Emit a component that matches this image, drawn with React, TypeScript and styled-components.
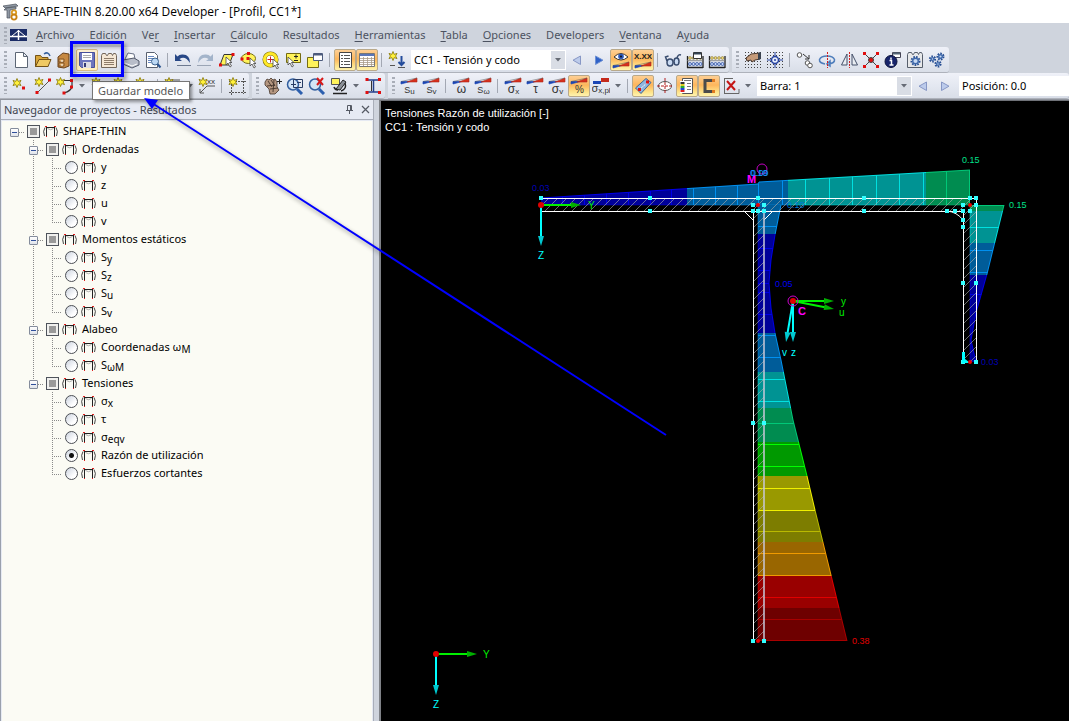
import React from "react";
import styled, { createGlobalStyle, css } from "styled-components";

const UI_FONT = '"Noto Sans", "Open Sans", sans-serif';

const GlobalStyle = createGlobalStyle`
  *, *::before, *::after { box-sizing: border-box; }
  body { margin: 0; background: #cfd4dd; font-family: ${UI_FONT}; font-size: 11px; color: #000; }
  button, input, select { font: inherit; color: inherit; margin: 0; padding: 0; }
`;

/* ---------- window frame ---------- */

const AppWindow = styled.div`
  position: relative;
  display: flex;
  flex-direction: column;
  min-height: 100vh;
  overflow: hidden;
`;

const TitleBar = styled.header`
  display: flex;
  align-items: center;
  gap: 4px;
  height: 23px;
  padding-left: 2px;
  background: #fff;
  font-family: "Open Sans", sans-serif;
  font-size: 12px;
  white-space: nowrap;
`;

const MenuBar = styled.nav`
  display: flex;
  align-items: center;
  height: 24px;
  background: #cfd4dd;
`;

const MenuLogo = styled.span`
  display: flex;
  width: 17px;
  margin-right: 9px;
`;

const MenuButton = styled.button`
  border: 0;
  background: none;
  color: #4c5260;
  line-height: 16px;
  margin-right: 15px;
  white-space: nowrap;
  u { text-underline-offset: 2px; }
`;

/* ---------- toolbars ---------- */

const ToolbarRow = styled.div`
  display: flex;
  gap: 3px;
  height: 26px;
  background: #cfd4dd;
`;

const Toolbar = styled.div<{ $grow?: boolean }>`
  display: flex;
  align-items: center;
  flex: ${(p) => (p.$grow ? "1 1 0" : "0 0 auto")};
  min-width: 0;
  padding-right: ${(p) => (p.$grow ? 0 : 1)}px;
  background: linear-gradient(#eff1f8, #e4e8f1 50%, #d9dee8);
  border-bottom: 1px solid #aeb2bb;
  border-radius: 0 3px 3px 0;
`;

const Grip = styled.span`
  flex: none;
  width: 3px;
  height: 17px;
  margin: 0 3px 0 4px;
  background: repeating-linear-gradient(#a9aeb8 0 2px, transparent 2px 4px);
`;

const hotStyle = {
  on: css`
    border-color: #b9a98a;
    background: linear-gradient(#fdcf95, #fdb65c 45%, #fee38a 80%, #fff3b0);
  `,
  hover: css`
    border-color: #d9bd84;
    background: linear-gradient(#fff3d8, #fbe0ac 50%, #fff0c0);
  `,
};

const ToolButton = styled.button<{ $state?: "on" | "hover" }>`
  display: flex;
  align-items: center;
  justify-content: center;
  flex: none;
  width: 22px;
  height: 22px;
  border: 1px solid transparent;
  border-radius: 2px;
  background: none;
  ${(p) => p.$state && hotStyle[p.$state]}
`;

const Separator = styled.span`
  flex: none;
  width: 1px;
  height: 14px;
  margin: 0 4px 0 3px;
  background: #a3a8b3;
`;

const DropButton = styled.button`
  display: flex;
  align-items: center;
  justify-content: center;
  flex: none;
  width: 12px;
  height: 22px;
  border: 0;
  background: none;
`;

const ComboFrame = styled.label<{ $width: number }>`
  display: flex;
  align-items: stretch;
  flex: none;
  width: ${(p) => p.$width}px;
  height: 20px;
  margin-left: 3px;
  background: #fff;
  border: 1px solid #fff;
`;

const ComboSelect = styled.select`
  appearance: none;
  flex: 1;
  min-width: 0;
  border: 0;
  background: none;
  padding-left: 2px;
`;

const ComboArrow = styled.span`
  display: flex;
  align-items: center;
  justify-content: center;
  width: 14px;
  background: #d9dde5;
`;

const PositionInput = styled.input`
  flex: 1 1 0;
  min-width: 0;
  height: 20px;
  margin-left: 3px;
  padding-left: 3px;
  border: 0;
  border-radius: 0;
  background: #fff;
`;

/* ---------- workspace ---------- */

const Workspace = styled.main`
  display: flex;
  flex: 1;
  gap: 5px;
  border-top: 1px solid #8f939c;
`;

const Navigator = styled.section`
  display: flex;
  flex-direction: column;
  flex: none;
  width: 374px;
  border-left: 1px solid #9aa0ac;
  border-right: 1px solid #a9aeb9;
  background: #e6eaf3;
`;

const NavigatorHeader = styled.div`
  display: flex;
  align-items: center;
  gap: 4px;
  height: 20px;
  padding: 0 2px 0 3px;
  border-bottom: 1px solid #a9aeb9;
  color: #3f4550;
`;

const NavigatorTitle = styled.h2`
  flex: 1;
  margin: 0;
  font: inherit;
  white-space: nowrap;
`;

const PanelButton = styled.button`
  display: flex;
  align-items: center;
  justify-content: center;
  width: 12px;
  height: 14px;
  border: 0;
  background: none;
`;

const Tree = styled.ul`
  flex: 1;
  margin: 1px 1px 0;
  padding: 1px 0 0 3px;
  list-style: none;
  background: #fbfbf4;
`;

const Branch = styled.ul`
  margin: 0;
  padding: 0;
  list-style: none;
`;

const TreeRow = styled.div`
  display: flex;
  align-items: center;
  height: 18px;
`;

type GuideKind = "blank" | "pipe" | "tee" | "elbow" | "node" | "nodeTee" | "nodeElbow";

const dotsDown = "repeating-linear-gradient(#8a8a8a 0 1px, transparent 1px 2px)";
const dotsAcross = "repeating-linear-gradient(90deg, #8a8a8a 0 1px, transparent 1px 2px)";

const guides: Record<GuideKind, string> = {
  blank: "none",
  pipe: `${dotsDown} 9px 0 / 1px 18px no-repeat`,
  tee: `${dotsDown} 9px 0 / 1px 18px no-repeat, ${dotsAcross} 9px 10px / 12px 1px no-repeat`,
  elbow: `${dotsDown} 9px 0 / 1px 10px no-repeat, ${dotsAcross} 9px 10px / 12px 1px no-repeat`,
  node: `${dotsAcross} 14px 10px / 6px 1px no-repeat`,
  nodeTee: `${dotsDown} 9px 0 / 1px 18px no-repeat, ${dotsAcross} 14px 10px / 6px 1px no-repeat`,
  nodeElbow: `${dotsDown} 9px 0 / 1px 10px no-repeat, ${dotsAcross} 14px 10px / 6px 1px no-repeat`,
};

const Guide = styled.span<{ $kind: GuideKind }>`
  display: flex;
  align-items: flex-end;
  justify-content: center;
  flex: none;
  width: 19px;
  height: 18px;
  background: ${(p) => guides[p.$kind]};
`;

const Expander = styled.button`
  width: 9px;
  height: 9px;
  margin-bottom: 3px;
  border: 1px solid #848c9c;
  border-radius: 1px;
  background: linear-gradient(#2f4f9a, #2f4f9a) center / 5px 1px no-repeat, linear-gradient(#fff, #dfe3ea);
`;

const NodeLabel = styled.label`
  display: flex;
  align-items: center;
  margin-left: 3px;
  white-space: nowrap;
`;

const NodeCheck = styled.input`
  appearance: none;
  width: 13px;
  height: 13px;
  margin-right: 3px;
  border: 1px solid #4e535b;
  background: linear-gradient(#999, #999) center / 7px 7px no-repeat, #f0f0ee;
`;

const NodeRadio = styled.input`
  appearance: none;
  width: 13px;
  height: 13px;
  margin-right: 3px;
  border: 1px solid #4c4f55;
  border-radius: 50%;
  background: linear-gradient(135deg, #ccd3df, #fff 70%);
  &:checked {
    background: radial-gradient(circle, #111 0 2px, transparent 3px), linear-gradient(135deg, #ccd3df, #fff 70%);
  }
`;

const NodeText = styled.span`
  margin-left: 5px;
  line-height: 18px;
`;

const Lowered = styled.span`
  position: relative;
  top: 2px;
  font-size: 10px;
`;

const Canvas = styled.section`
  flex: 1;
  min-width: 0;
  overflow: hidden;
  border-left: 2px solid #7f8287;
  border-top: 1px solid #6f7278;
  background: #000;
`;

const Scene = styled.svg`
  display: block;
  font-family: "Liberation Sans", Arial, sans-serif;
  font-size: 10px;
`;

const SceneTitle = styled.text`
  font-size: 11px;
  fill: #fff;
`;

/* ---------- annotations over the window ---------- */

const Tooltip = styled.div`
  position: absolute;
  left: 92px;
  top: 81px;
  padding: 0 6px 0 5px;
  border: 1px solid #767676;
  background: #fff;
  color: #575757;
  line-height: 17px;
  box-shadow: 2px 2px 3px rgba(0, 0, 0, 0.4);
  white-space: nowrap;
`;

const Annotation = styled.svg`
  position: absolute;
  left: 0;
  top: 0;
  pointer-events: none;
  filter: drop-shadow(2px 3px 2px rgba(0, 0, 0, 0.4));
`;

/* ---------- icons (18 x 18) ---------- */

const Star = ({ x = 5, y = 5 }: { x?: number; y?: number }) => (
  <path
    transform={`translate(${x} ${y})`}
    d="M0-4.5 1.2-1.6 4-2.6 2.6 0 4 2.6 1.2 1.6 0 4.5-1.2 1.6-4 2.6-2.6 0-4-2.6-1.2-1.6z"
    fill="#fff13a"
    stroke="#857400"
    strokeWidth=".8"
  />
);

const Red = ({ x, y }: { x: number; y: number }) => <rect x={x - 1.5} y={y - 1.5} width="3" height="3" fill="#e01010" />;

const Wedge = ({ y = 1 }: { y?: number }) => (
  <g transform={`translate(1 ${y})`}>
    <path d="M0 3.500H9L0 6z" fill="#1b46b5" stroke="#1b46b5" strokeWidth=".7" />
    <path d="M6 4 16 0V4z" fill="#d8301c" stroke="#b02a1c" strokeWidth=".6" />
    <path d="M0 3.500 16 0" stroke="#555" strokeWidth=".5" />
  </g>
);

const Result = ({ main, sub = "", size = 12 }: { main: string; sub?: string; size?: number }) => (
  <>
    <Wedge />
    <text x="9.5" y="16" textAnchor="middle" fontSize={size} fontFamily="Liberation Sans" fill="#333">
      {main}
      <tspan fontSize="8" dy="1">{sub}</tspan>
    </text>
  </>
);

const Pointer = ({ x, y }: { x: number; y: number }) => (
  <path transform={`translate(${x} ${y})`} d="M0 0v8l2-2 2 4 1.5-1-2-3.500H6z" fill="#fff" stroke="#444" strokeWidth=".8" />
);

const Lens = () => (
  <>
    <path d="m11 12 5 5" stroke="#2c5fae" strokeWidth="3" />
    <circle cx="7" cy="7.500" r="5.500" fill="#cfe3f8" fillOpacity=".8" stroke="#335f9f" strokeWidth="1.500" />
  </>
);

const Abacus = () => (
  <>
    <path d="M1.500 5v12M17 5v12M1 16.500h16" stroke="#222" strokeWidth="1.300" />
    <path d="M1 9.700h16" stroke="#777" strokeWidth=".8" />
    {[4, 7.5, 11, 14.5].map((x) => (
      <g key={x}>
        <circle cx={x} cy="7" r="1.400" fill="#f2dc78" stroke="#6b5a1c" strokeWidth=".5" />
        <circle cx={x} cy="13" r="1.500" fill="#c3d6fb" stroke="#1d3f96" strokeWidth=".7" />
      </g>
    ))}
  </>
);

const Gear = ({ x, y, r }: { x: number; y: number; r: number }) => (
  <>
    <circle cx={x} cy={y} r={r} fill="none" stroke="#284f93" strokeWidth="2" strokeDasharray="1.600 1.100" />
    <circle cx={x} cy={y} r={r - 1.2} fill="#c9dbf4" stroke="#3f69ac" strokeWidth="1.400" />
  </>
);

const DotGrid = () => (
  <>
    {[1, 4, 7, 10, 13, 16].map((y) => (
      <path key={y} d={`M1 ${y}.5H18`} stroke="#444" strokeDasharray="1 2" />
    ))}
  </>
);

const icons: Record<string, React.ReactNode> = {
  new: <path d="M3.500 1.500h8l4 4v11h-12zM11.500 1.500v4h4" fill="#fff" stroke="#5c6675" />,
  open: (
    <>
      <path d="M1.500 15.500v-11h5l1.500 2h6v9z" fill="#d7a53a" stroke="#735217" />
      <path d="m1.500 15.500 3.500-7h12l-3 7z" fill="#efc963" stroke="#735217" />
      <path d="M10 3q4-3 6 2" fill="none" stroke="#36609d" strokeWidth="1.500" />
    </>
  ),
  cabinet: (
    <>
      <path d="m2 6 5-4 6 1v12l-5 2-6-1z" fill="#c68942" stroke="#68401a" />
      <path d="M3 8h5v3H3zM3 12h5v3H3z" fill="#e4af67" stroke="#68401a" strokeWidth=".7" />
      <path d="M5 10h2M5 14h2" stroke="#fff" />
    </>
  ),
  save: (
    <>
      <path d="M1.500 1.500h15v15h-13l-2-2z" fill="#6b74bd" stroke="#47509a" />
      <path d="M4 2h10v7H4z" fill="#fff" />
      <path d="M5 4.500h8M5 6.500h8" stroke="#aaa" />
      <path d="M5 11h8v6H5z" fill="#dcdce4" />
      <path d="M6 12h2v4H6z" fill="#333a77" />
    </>
  ),
  props: (
    <>
      <path d="M1.500 16.500v-12l1-2h3l1 2h1l1-2h3l1 2 1-2h2l1 2v12z" fill="#f5e7d5" stroke="#73665a" />
      <path d="M4 7.500h10M4 9.500h10M4 11.500h10M4 13.500h10" stroke="#8d7b69" />
    </>
  ),
  print: (
    <>
      <path d="m3 8 3-6 6 1 1 5" fill="#fff" stroke="#697287" />
      <path d="m1 9 11-2 5 3v4l-7 3-9-4z" fill="#b8bdc9" stroke="#52596a" />
      <path d="m3 12 7 3 5-2" fill="none" stroke="#fff" />
    </>
  ),
  preview: (
    <>
      <path d="M2.500 1.500h8l3 3v12h-11z" fill="#fff" stroke="#596170" />
      <path d="M4 5.500h6M4 7.500h7M4 9.500h4M4 11.500h3" stroke="#6888c0" />
      <circle cx="11" cy="10.500" r="3.500" fill="#bcd8f4" stroke="#3e648f" />
      <path d="m13.500 13 3 3.500" stroke="#2e5790" strokeWidth="2" />
    </>
  ),
  undo: (
    <>
      <path d="M1 3v7h7L5.500 8Q11 4 16 12q0-9-8-8.500-3 0-4.500 2z" fill="#274786" />
      <path d="M3 14.500h14" stroke="#6d7990" />
    </>
  ),
  redo: (
    <>
      <path d="M17 3v7h-7l2.500-2Q7 4 2 12q0-9 8-8.500 3 0 4.500 2z" fill="#a3b4ca" />
      <path d="M1 14.500h14" stroke="#9ba5b5" />
    </>
  ),
  para: (
    <>
      <path d="M6 3.500h9L11 14H2z" fill="#fff35a" stroke="#333" />
      <Red x={15} y={3.5} /><Red x={2.5} y={14} />
      <Pointer x={8} y={6} />
    </>
  ),
  ellipse: (
    <>
      <ellipse cx="8.500" cy="7.500" rx="7" ry="5" fill="#fff35a" stroke="#756b12" />
      <Red x={8.500} y={2.500} /><Red x={2} y={8} /><Red x={8} y={7.500} />
      <Pointer x={10} y={7} />
    </>
  ),
  ring: (
    <>
      <circle cx="8.500" cy="8.500" r="6" fill="#fff" stroke="#7a6a00" strokeWidth="4" />
      <circle cx="8.500" cy="8.500" r="6" fill="none" stroke="#ffe928" strokeWidth="3" />
      <path d="M5.500 8.500h6M8.500 5.500v6" stroke="#d02020" />
      <Pointer x={11} y={8} />
    </>
  ),
  area: (
    <>
      <path d="M2.500 2.500h14v9h-14z" fill="#fff35a" stroke="#756b12" />
      <path d="M10 5.500h4M12 3.500v4M10 9.500h4" stroke="#222" />
      <Pointer x={4} y={6} />
    </>
  ),
  frames: (
    <>
      <path d="M1.500 6.500h11v10h-11z" fill="#fff35a" stroke="#756b12" />
      <path d="M7.500 2.500h9v7h-9z" fill="#fff" stroke="#4c5b7c" /><path d="M8 3.500h8" stroke="#4c5b7c" strokeWidth="2" />
    </>
  ),
  navigator: (
    <>
      <path d="M3.500 1.500h12v15h-12z" fill="#fff" stroke="#444" />
      <path d="M5 4.500h2M5 7.500h2M5 10.500h2M5 13.500h2M8 4.500h6M8 7.500h6M8 10.500h6M8 13.500h6" stroke="#555" />
    </>
  ),
  tables: (
    <>
      <path d="M1.500 2.500h15v13h-15z" fill="#fff" stroke="#777" />
      <path d="M2 4h14" stroke="#5a76b8" strokeWidth="2" />
      <path d="M2 7.500h14M2 9.500h14M2 11.500h14M2 13.500h14M5.500 6v9M9.500 6v9M13.500 6v9" stroke="#a89b88" strokeWidth=".8" />
    </>
  ),
  loadcase: (
    <>
      <Star x={5} y={5} />
      <path d="M2 14.500h5M10 16.500h7" stroke="#555" />
      <path d="M13.500 5v9m-3-3 3 3 3-3" stroke="#244c9c" strokeWidth="2" />
    </>
  ),
  prev: <path d="M12.500 5v8.500L5 9.200z" fill="#bccbeb" stroke="#8797c5" />,
  next: <path d="M5.500 5v8.500L13 9.200z" fill="#2f62c8" stroke="#6f91d4" />,
  nextSoft: <path d="M5.500 5v8.500L13 9.200z" fill="#bccbeb" stroke="#8797c5" />,
  eye: (
    <>
      <path d="M2 6q7-7 14 0-7 6-14 0z" fill="#fff" stroke="#333" />
      <circle cx="9" cy="5.500" r="2.800" fill="#2b56b8" /><circle cx="9" cy="5.500" r="1" fill="#111" />
      <Wedge y={11} />
    </>
  ),
  values: (
    <>
      <text x="9" y="8" textAnchor="middle" fontSize="8" fontWeight="bold" fontFamily="Liberation Sans" fill="#222">X.XX</text>
      <Wedge y={11} />
    </>
  ),
  glasses: (
    <>
      <ellipse cx="6" cy="11.500" rx="3" ry="3.500" fill="#c9daf2" stroke="#394c6e" strokeWidth="1.500" />
      <ellipse cx="12.500" cy="10.500" rx="2.500" ry="3.500" fill="#c9daf2" stroke="#394c6e" strokeWidth="1.500" />
      <path d="M3 10 1.500 6l3-1M13 7q1-4 4-3" fill="none" stroke="#394c6e" strokeWidth="1.500" />
    </>
  ),
  calcAll: (
    <>
      <Abacus />
      <path d="M7.500 1.500h8v6h-8z" fill="#fff" stroke="#333" /><path d="M8 2.500h7" stroke="#345" strokeWidth="2" />
    </>
  ),
  calc: <Abacus />,
  handGrid: (
    <>
      <DotGrid />
      <path d="m2 7 5-4 9-1v6l-5 1-3 2-1-2-4 1z" fill="#c49a79" stroke="#4a382e" />
      <path d="m14 2 3-1v7l-3 1z" fill="#39424f" />
    </>
  ),
  snapGrid: (
    <>
      <DotGrid />
      <path d="M9 1v16M1 9h16" stroke="#2542a0" />
      <circle cx="9" cy="9" r="3.500" fill="#e6ebfa" stroke="#2542a0" strokeWidth="1.500" />
      <circle cx="9" cy="9" r="1" fill="#2542a0" />
    </>
  ),
  copy: (
    <>
      <circle cx="3.500" cy="4" r="2.300" fill="#fff" stroke="#555" />
      <circle cx="11.500" cy="12" r="2.300" fill="#fff" stroke="#555" />
      <circle cx="14" cy="14.500" r="2.300" fill="#fff" stroke="#555" />
      <path d="m7 3 6 5m0-4v4H9" fill="none" stroke="#333" />
    </>
  ),
  rotate: (
    <>
      <path d="M7 13Q1 12 1.500 8.500 3 5 9 5t7.500 3.500Q17 12 11 13M12 10v5l-3-2z" fill="none" stroke="#4f7ebc" strokeWidth="1.500" />
      <path d="M9.500 1v16" stroke="#d02020" strokeDasharray="2 1" />
    </>
  ),
  mirror: (
    <>
      <path d="M7 3v11H1.500zM12 3v11h5.500z" fill="#e9edf2" stroke="#44506a" />
      <path d="M9.500 1v16" stroke="#d02020" strokeDasharray="2 1" />
    </>
  ),
  cross: (
    <>
      <path d="m2 2 14 14M16 2 2 16" stroke="#444" />
      <circle cx="9" cy="9" r="2.500" fill="#e01010" stroke="#444" />
      <Red x={2.500} y={2.500} /><Red x={15.500} y={2.500} /><Red x={2.500} y={15.500} /><Red x={15.500} y={15.500} />
    </>
  ),
  info: (
    <>
      <path d="M8.500 1.500h8v5h-8z" fill="#fff" stroke="#445" /><path d="M9 2.500h7" stroke="#567" strokeWidth="2" />
      <circle cx="7" cy="10.500" r="6" fill="#17246b" stroke="#0b123b" />
      <path d="M7 6.500v2M5.500 9.500h2v4M5.500 14h4" stroke="#fff" strokeWidth="1.500" fill="none" />
    </>
  ),
  modules: (
    <>
      <path d="M1.500 16.500v-13l1-2h3l1 2h1l1-2h3l1 2 1-2h2l1 2v13z" fill="#e7e8ea" stroke="#565e6b" />
      <Gear x={9.500} y={10} r={4} />
    </>
  ),
  gears: (
    <>
      <Gear x={4.500} y={8} r={2.600} /><Gear x={12.500} y={5.500} r={3} /><Gear x={10} y={13} r={2.600} />
    </>
  ),
  node: (<><Star x={5} y={6} /><Red x={11.500} y={11} /></>),
  line: (<><path d="M3 16 16 3" stroke="#555" /><Red x={3} y={15.500} /><Red x={15.500} y={3} /><Star x={5} y={5} /></>),
  poly: (
    <>
      <path d="M5 3.500h11v6Q15 14 8 16" fill="none" stroke="#333" strokeWidth="1.200" />
      <Red x={15.500} y={3.500} /><Red x={15.500} y={10} /><Red x={8} y={16} /><Star x={4.500} y={5} />
    </>
  ),
  element: (<><path d="M4 15h12V5" fill="none" stroke="#555" strokeWidth="2" /><Star x={6} y={5} /></>),
  dimension: (<><path d="M2 15 7 9M3 3h13M4 8h12M2 12v4h4" fill="none" stroke="#555" /><Star x={5} y={5} /></>),
  dimXX: (
    <>
      <path d="m2 16 7-7h8M2 12v4h4" fill="none" stroke="#555" />
      <Star x={5} y={5} />
      <text x="9" y="7" fontSize="8" fontFamily="Liberation Sans" fill="#333">xx</text>
    </>
  ),
  guides: (
    <>
      <path d="M3.500 4v14M15.500 1v16M1 4.500h17M1 15.500h17" stroke="#555" strokeDasharray="2 1" /><Star x={5} y={5} />
    </>
  ),
  hand: (
    <>
      <path d="m1 5 2-3 2 1 2-2 2 2 2-1 2 3v5l2 3-4 4H6l-1-5-4-4z" fill="#b59781" stroke="#44352b" strokeWidth=".8" />
      <path d="m4 4 4 6M7 3l4 6M3 9l8-1M6 12l8-1M10 3l-1 12" stroke="#44352b" strokeWidth=".9" />
      <path d="M13 4.500h5M15.500 2v5" stroke="#222" />
    </>
  ),
  zoomWindow: (<><Lens /><path d="M7.500 2.500h9v8h-9z" fill="none" stroke="#273b63" /><path d="M5 7.500h5M11 5.500h4" stroke="#273b63" /></>),
  zoomOff: (<><Lens /><path d="m9 1 6 7M15 1 9 8" stroke="#d71919" strokeWidth="2" /></>),
  view: (
    <>
      <path d="M1.500 1.500h8v6h-8z" fill="#fff35a" stroke="#555" />
      <path d="m6 12 7-9 3 2-6 8z" fill="#8a8f96" stroke="#222" />
      <path d="M4 10q1 3 4 3M3 16.500h14M15 6q2 6-4 8" stroke="#222" strokeWidth="1.500" />
    </>
  ),
  section: (
    <>
      <path d="M3 3h12M9.500 3v12M3 15h12" stroke="#24408c" strokeWidth="1.500" />
      <path d="M7.500 4v10" stroke="#333" />
      <Red x={3} y={2.500} /><Red x={15.500} y={2.500} /><Red x={3} y={15.500} /><Red x={15.500} y={15.500} />
    </>
  ),
  su: <Result main="S" sub="u" size={9} />,
  sv: <Result main="S" sub="v" size={9} />,
  omega: <Result main="ω" />,
  somega: <Result main="S" sub="ω" size={9} />,
  sigmax: <Result main="σ" sub="x" />,
  tau: <Result main="τ" />,
  sigmav: <Result main="σ" sub="v" />,
  ratio: <Result main="%" size={10} />,
  sigmapl: (
    <>
      <path d="M1 4h8v3H1z" fill="#1b46b5" /><path d="M9 1h8v4H9z" fill="#c52a1c" />
      <text x="9" y="15" textAnchor="middle" fontSize="11" fontFamily="Liberation Sans" fill="#333">
        σ<tspan fontSize="8" dy="1">x,pl</tspan>
      </text>
    </>
  ),
  solid: (
    <>
      <path d="M1.500 11 12 1.500l5 4L7 16.500z" fill="#8fb4df" stroke="#3f6694" />
      <path d="m5 13 9-8" stroke="#fff" strokeDasharray="2 1" /><Red x={13.500} y={5} /><Red x={5.500} y={12.500} />
    </>
  ),
  target: (
    <>
      <ellipse cx="9" cy="9" rx="6.500" ry="4.500" fill="#fff" stroke="#555" />
      <path d="M9 1v16M1 9h16" stroke="#b32020" strokeDasharray="3 1" />
    </>
  ),
  panel: (
    <>
      <path d="M4.500 1.500h10v15h-10z" fill="#fff" stroke="#555" />
      <path d="M2 4h6v12H2z" fill="#fff" />
      <path d="M2.500 6h4" stroke="#333" strokeWidth="2" /><path d="M2.500 8h4" stroke="#dc2" strokeWidth="2" />
      <path d="M2.500 10h4" stroke="#2a3" strokeWidth="2" /><path d="M2.500 12h4" stroke="#24c" strokeWidth="2" />
      <path d="M2.500 14h4" stroke="#d22" strokeWidth="2" />
      <path d="M6 3.500h7M9 6.500h4M9 9.500h4M9 12.500h4" stroke="#777" />
    </>
  ),
  profile: (<><path d="M12 3.500H5v11h7" fill="none" stroke="#4b4b4b" strokeWidth="3" /><path d="M12 3.500h3M12 14.500h3" stroke="#e07a20" strokeWidth="3" /></>),
  clear: (
    <>
      <path d="M2.500 17V1.500M2 16.500h15V12M2 1.500h9" fill="none" stroke="#666" />
      <path d="m5 4 8 9M13 4 5 13" stroke="#c51616" strokeWidth="2" />
    </>
  ),
};

const Icon = ({ name }: { name: string }) => (
  <svg width="18" height="18" viewBox="0 0 18 18" fill="none" aria-hidden="true">
    {icons[name]}
  </svg>
);

const CaretDown = () => (
  <svg width="6" height="4" viewBox="0 0 6 4" aria-hidden="true">
    <path d="M0 0h6L3 3.500z" fill="#666b75" />
  </svg>
);

const SectionGlyph = () => (
  <svg width="15" height="13" viewBox="0 0 15 13" fill="none" aria-hidden="true">
    <path d="M2 2.500Q-.5 6 1.500 11M13 2.500Q15.500 6 13.500 11" stroke="#333" strokeWidth=".9" />
    <path d="M3 2.500h9M3.500 3v8M11.500 3v8" stroke="#222" />
    <path d="M4.500 3.500q3 2.500 6 0" stroke="#999" strokeWidth=".8" />
    <path d="M2 1.500h2M11 1.500h2M3 11.500h1M11 11.500h1" stroke="#e02020" />
  </svg>
);

/* ---------- toolbar content ---------- */

type Tool = { icon: string; label: string; state?: "on" | "hover"; drop?: boolean };
const t = (icon: string, label: string, state?: "on" | "hover", drop?: boolean): Tool => ({ icon, label, state, drop });

const fileTools: Tool[][] = [
  [
    t("new", "Nuevo"), t("open", "Abrir"), t("cabinet", "Administrador de proyectos"), t("save", "Guardar modelo", "hover"),
    t("props", "Propiedades"), t("print", "Imprimir"), t("preview", "Informe"),
  ],
  [
    t("undo", "Deshacer"), t("redo", "Rehacer"), t("para", "Selección por paralelogramo"), t("ellipse", "Selección por elipse"),
    t("ring", "Selección por anillo"), t("area", "Selección por ventana"), t("frames", "Ventanas"),
  ],
  [t("navigator", "Navegador", "on"), t("tables", "Tablas", "on")],
  [t("loadcase", "Nuevo caso de carga")],
];
const caseTools: Tool[][] = [
  [t("prev", "Caso anterior"), t("next", "Caso siguiente"), t("eye", "Mostrar resultados", "on"), t("values", "Mostrar valores", "on")],
  [t("glasses", "Vista"), t("calcAll", "Calcular todo"), t("calc", "Calcular")],
];
const editTools: Tool[][] = [
  [t("handGrid", "Plano de trabajo"), t("snapGrid", "Rejilla")],
  [
    t("copy", "Mover o copiar"), t("rotate", "Girar"), t("mirror", "Simetría"), t("cross", "Intersección"),
    t("info", "Información"), t("modules", "Módulos"), t("gears", "Configuración"),
  ],
];
const insertTools: Tool[][] = [
  [
    t("node", "Nuevo nudo"), t("line", "Nueva línea"), t("poly", "Nuevo arco", undefined, true), t("element", "Nuevo elemento"),
    t("element", "Nueva sección"), t("element", "Nuevo punto"),
  ],
  [t("dimension", "Acotación", undefined, true), t("dimXX", "Comentario")],
  [t("guides", "Líneas auxiliares")],
];
const viewTools: Tool[][] = [
  [
    t("hand", "Mover vista"), t("zoomWindow", "Zoom ventana"), t("zoomOff", "Zoom anterior"),
    t("view", "Vista", undefined, true), t("section", "Sección"),
  ],
];
const resultTools: Tool[][] = [
  [t("su", "Su"), t("sv", "Sv")],
  [t("omega", "Omega"), t("somega", "S omega")],
  [
    t("sigmax", "Sigma x"), t("tau", "Tau"), t("sigmav", "Sigma v"), t("ratio", "Razón de utilización", "on"),
    t("sigmapl", "Sigma x,pl", undefined, true),
  ],
  [
    t("solid", "Relleno", "on"), t("target", "Centro"), t("panel", "Panel", "on"), t("profile", "Perfil", "on"),
    t("clear", "Borrar", undefined, true),
  ],
];
const stepTools: Tool[][] = [[t("prev", "Anterior"), t("nextSoft", "Siguiente")]];

const ToolGroups = ({ groups }: { groups: Tool[][] }) => (
  <>
    {groups.map((group, g) => (
      <React.Fragment key={g}>
        {g > 0 && <Separator />}
        {group.map((tool, i) => (
          <React.Fragment key={i}>
            <ToolButton type="button" aria-label={tool.label} $state={tool.state}>
              <Icon name={tool.icon} />
            </ToolButton>
            {tool.drop && (
              <DropButton type="button" aria-label={`${tool.label}: opciones`}>
                <CaretDown />
              </DropButton>
            )}
          </React.Fragment>
        ))}
      </React.Fragment>
    ))}
  </>
);

const Combo = ({ label, value, width }: { label: string; value: string; width: number }) => (
  <ComboFrame $width={width}>
    <ComboSelect aria-label={label} defaultValue={value}>
      <option>{value}</option>
    </ComboSelect>
    <ComboArrow>
      <CaretDown />
    </ComboArrow>
  </ComboFrame>
);

const menus: [string, string, string][] = [
  ["", "A", "rchivo"], ["", "E", "dición"], ["Ve", "r", ""], ["", "I", "nsertar"], ["", "C", "álculo"], ["Res", "u", "ltados"],
  ["", "H", "erramientas"], ["", "T", "abla"], ["", "O", "pciones"], ["Developers", "", ""], ["", "V", "entana"], ["A", "y", "uda"],
];

/* ---------- navigator tree ---------- */

type Leaf = { text: string; low?: string };
const branches: { text: string; leaves: Leaf[] }[] = [
  { text: "Ordenadas", leaves: [{ text: "y" }, { text: "z" }, { text: "u" }, { text: "v" }] },
  {
    text: "Momentos estáticos",
    leaves: [{ text: "S", low: "y" }, { text: "S", low: "z" }, { text: "S", low: "u" }, { text: "S", low: "v" }],
  },
  { text: "Alabeo", leaves: [{ text: "Coordenadas ω", low: "M" }, { text: "S", low: "ωM" }] },
  {
    text: "Tensiones",
    leaves: [
      { text: "σ", low: "x" }, { text: "τ" }, { text: "σ", low: "eqv" },
      { text: "Razón de utilización" }, { text: "Esfuerzos cortantes" },
    ],
  },
];

const GroupNode = ({ text, nested, guide }: { text: string; nested?: boolean; guide: GuideKind }) => (
  <TreeRow>
    {nested && <Guide $kind="blank" />}
    <Guide $kind={guide}>
      <Expander type="button" aria-label={`Contraer ${text}`} />
    </Guide>
    <NodeLabel>
      <NodeCheck type="checkbox" />
      <SectionGlyph />
      <NodeText>{text}</NodeText>
    </NodeLabel>
  </TreeRow>
);

const NavigatorTree = () => (
  <Tree>
    <li>
      <GroupNode text="SHAPE-THIN" guide="node" />
      <Branch>
        {branches.map((branch, b) => (
          <li key={branch.text}>
            <GroupNode text={branch.text} nested guide={b < branches.length - 1 ? "nodeTee" : "nodeElbow"} />
            <Branch>
              {branch.leaves.map((leaf, i) => (
                <li key={i}>
                  <TreeRow>
                    <Guide $kind="blank" />
                    <Guide $kind={b < branches.length - 1 ? "pipe" : "blank"} />
                    <Guide $kind={i < branch.leaves.length - 1 ? "tee" : "elbow"} />
                    <NodeLabel>
                      <NodeRadio type="radio" name="result" defaultChecked={leaf.text === "Razón de utilización"} />
                      <SectionGlyph />
                      <NodeText>
                        {leaf.text}
                        {leaf.low && <Lowered>{leaf.low}</Lowered>}
                      </NodeText>
                    </NodeLabel>
                  </TreeRow>
                </li>
              ))}
            </Branch>
          </li>
        ))}
      </Branch>
    </li>
  </Tree>
);

/* ---------- cross-section scene ---------- */

const hues = {
  navy: ["#000099", "#0000e6"],
  blue: ["#005c99", "#0090f0"],
  teal: ["#009393", "#00e0e0"],
  sea: ["#008c50", "#00c878"],
  green: ["#009900", "#00ff00"],
  yellow: ["#999900", "#f0f000"],
  olive: ["#7d7d00", "#b9b900"],
  orange: ["#996600", "#f09a00"],
  red: ["#990000", "#e00000"],
  maroon: ["#6e0000", "#a80000"],
} as const;
type Hue = keyof typeof hues;
type Band = [Hue, number, number];

const flangeBands: Band[] = [["navy", 541, 687], ["blue", 687, 788], ["teal", 788, 926], ["sea", 926, 970]];
const webBands: Band[] = [
  ["blue", 205, 234], ["navy", 234, 333], ["blue", 333, 372], ["teal", 372, 408], ["sea", 408, 442], ["green", 442, 476],
  ["yellow", 476, 510], ["olive", 510, 542], ["orange", 542, 576], ["red", 576, 608], ["maroon", 608, 641],
];
const sideBands: Band[] = [["sea", 205, 211], ["teal", 211, 243], ["blue", 243, 275], ["navy", 275, 362]];

const flangeProfile: [number, number][] = [[541, 198], [758, 184], [759, 182], [970, 170]];
const webProfile: [number, number][] = [
  [205, 781], [235, 775], [260, 771], [283, 769], [308, 771], [333, 775], [360, 781], [420, 793], [476, 807], [510, 815], [575, 831], [641, 847],
];
const sideProfile: [number, number][] = [[205, 1004], [274, 987], [313, 976], [340, 971], [362, 976]];

const valueAt = (profile: [number, number][], at: number) => {
  for (let i = 1; i < profile.length; i++) {
    const [a, va] = profile[i - 1];
    const [b, vb] = profile[i];
    if (at <= b) return va + ((vb - va) * (at - a)) / (b - a);
  }
  return profile[profile.length - 1][1];
};

const Diagram = ({ profile, bands, base, ticks, across }: {
  profile: [number, number][]; bands: Band[]; base: number; ticks: number[]; across?: boolean;
}) => {
  const point = (along: number, value: number) => (across ? `${along},${value}` : `${value},${along}`);
  return (
    <>
      {bands.map(([hue, from, to]) => {
        const stops = [from, ...profile.map((p) => p[0]).filter((p) => p > from && p < to), to];
        const edge = stops.map((s) => point(s, valueAt(profile, s)));
        return (
          <g key={`${hue}${from}`}>
            <polygon points={[point(from, base), ...edge, point(to, base)].join(" ")} fill={hues[hue][0]} shapeRendering="crispEdges" />
            <polyline points={edge.join(" ")} fill="none" stroke={hues[hue][1]} />
            <polyline points={`${point(from, base)} ${point(to, base)}`} stroke={hues[hue][1]} strokeOpacity=".5" />
          </g>
        );
      })}
      {ticks.map((tick) => {
        const band = bands.find(([, from, to]) => tick >= from && tick <= to) ?? bands[0];
        const at = tick + 0.5;
        return <polyline key={tick} points={`${point(at, base)} ${point(at, valueAt(profile, tick))}`} stroke={hues[band[0]][1]} />;
      })}
    </>
  );
};

const handles: [number, number][] = [
  [541, 198], [650, 198], [650, 211], [758, 198], [753, 205], [764, 205], [753, 211], [758, 211], [764, 211], [864, 198], [864, 211],
  [947, 211], [955, 211], [963, 205], [963, 211], [963, 220], [963, 227], [970, 198], [976, 198], [976, 205], [970, 211],
  [963, 283], [976, 283], [963, 362], [976, 362], [753, 423], [764, 423], [753, 641], [764, 641],
];
const nodes: [number, number][] = [[541, 205], [758, 205], [970, 205], [970, 362], [758, 641]];

const Arrow = ({ from, to, color, tip }: { from: [number, number]; to: [number, number]; color: string; tip: string }) => {
  const length = Math.hypot(to[0] - from[0], to[1] - from[1]);
  const angle = (Math.atan2(to[1] - from[1], to[0] - from[0]) * 180) / Math.PI;
  return (
    <g transform={`translate(${from[0]} ${from[1]}) rotate(${angle})`}>
      <path d={`M0 0H${length - 8}`} stroke={color} strokeWidth="2" />
      <path d={`M${length - 10}-3 ${length} 0l-10 3z`} fill={tip} />
    </g>
  );
};

const GREEN = "#00f000";
const CYAN = "#00ffff";

const CrossSection = () => (
  <Scene width="688" height="620" viewBox="381 101 688 620" role="img" aria-label="Tensiones, razón de utilización">
    <defs>
      <pattern id="hatch" width="9" height="9" patternUnits="userSpaceOnUse">
        <path d="M-1 10 10-1M-1 1l2-2M8 10l2-2" stroke="#a8a8a8" strokeWidth=".8" />
      </pattern>
    </defs>

    <SceneTitle x="385" y="117">Tensiones Razón de utilización [-]</SceneTitle>
    <SceneTitle x="385" y="131">CC1 : Tensión y codo</SceneTitle>

    <Diagram across profile={flangeProfile} bands={flangeBands} base={205}
      ticks={[562, 584, 606, 628, 650, 671, 693, 715, 737, 758, 782, 805, 829, 852, 876, 899, 923, 946, 969]} />
    <Diagram profile={webProfile} bands={webBands} base={758}
      ticks={[226, 248, 270, 283, 292, 314, 335, 357, 379, 401, 423, 444, 466, 488, 510, 531, 553, 575, 597, 619, 640]} />
    <Diagram profile={sideProfile} bands={sideBands} base={970} ticks={[205, 227, 250, 272, 294]} />

    <path d="M541 198H976V362H963V211H764V641H753V211H541z" fill="url(#hatch)" fillOpacity=".8" />
    <g fill="none" stroke="#fff">
      <path d="M541 198.500H976.500V362M541 211.500H963.500V362M753.500 211V641M744 211l9 9M773 211l-9 9M947 211q10 1 16 9" />
      <path d="M764 211V641" stroke="#c8c8d8" strokeWidth="2" strokeOpacity=".75" />
    </g>

    {handles.map(([x, y]) => (
      <rect key={`${x}-${y}`} x={x - 2} y={y - 2} width="4" height="4" fill="#3ff" />
    ))}
    <path d="M962 352h3v7l4 3v1h-7z" fill={CYAN} />
    {nodes.map(([x, y]) => (
      <circle key={`${x}-${y}`} cx={x} cy={y} r="2" fill="#f00000" />
    ))}

    <Arrow from={[541, 205]} to={[581, 205]} color={GREEN} tip="#00b000" />
    <Arrow from={[541, 205]} to={[541, 246]} color={CYAN} tip="#00c8d0" />
    <circle cx="541" cy="205" r="3" fill="#e00000" />
    <Arrow from={[793, 301]} to={[834, 301]} color={GREEN} tip="#00b000" />
    <Arrow from={[793, 301]} to={[834, 309]} color={GREEN} tip="#00b000" />
    <Arrow from={[793, 301]} to={[793, 342]} color={CYAN} tip="#00c8d0" />
    <Arrow from={[793, 301]} to={[786, 342]} color={CYAN} tip="#00c8d0" />
    <circle cx="793" cy="301" r="3" fill="#e00000" />
    <circle cx="793" cy="301" r="5" fill="none" stroke="#d000d0" />
    <circle cx="762" cy="169" r="5" fill="none" stroke="#c000c0" />
    <Arrow from={[436, 654]} to={[477, 654]} color={GREEN} tip="#00b000" />
    <Arrow from={[436, 654]} to={[436, 695]} color={CYAN} tip="#00c8d0" />
    <circle cx="436" cy="654" r="3" fill="#e00000" />

    <g fill={GREEN}>
      <text x="588" y="209">Y</text>
      <text x="841" y="305">y</text>
      <text x="839" y="316">u</text>
      <text x="483" y="658">Y</text>
    </g>
    <g fill={CYAN}>
      <text x="538" y="259">Z</text>
      <text x="782" y="356">v</text>
      <text x="791" y="356">z</text>
      <text x="433" y="708">Z</text>
    </g>
    <g fill="#ff00ff" fontSize="11" fontWeight="bold">
      <text x="747" y="183">M</text>
      <text x="798" y="315">C</text>
    </g>
    <g fontSize="9">
      <text x="532" y="191" fill="#0000b4">0.03</text>
      <text x="750" y="176" fill="#1890ff">0.10</text>
      <text x="751" y="176" fill="#1890ff">0.09</text>
      <text x="787" y="208" fill="#0078d8">0.10</text>
      <text x="775" y="287" fill="#0000f0">0.05</text>
      <text x="962" y="163" fill="#00e08c">0.15</text>
      <text x="1009" y="208" fill="#00e08c">0.15</text>
      <text x="981" y="365" fill="#0000b4">0.03</text>
      <text x="852" y="644" fill="#e00000">0.38</text>
    </g>
  </Scene>
);

/* ---------- application ---------- */

export default function App() {
  return (
    <AppWindow>
      <GlobalStyle />
      <TitleBar>
        <svg width="17" height="18" viewBox="0 0 17 18" fill="none" aria-hidden="true">
          <path d="m1 3 13-2 2 2-13 2zM4 5l10-1v2L8 7v8H5V7H2z" fill="#8f98a3" stroke="#4a525c" strokeWidth=".7" />
          <circle cx="12" cy="9.500" r="2.200" stroke="#d99a20" strokeWidth="1.800" />
          <circle cx="12" cy="14" r="2.600" stroke="#c98210" strokeWidth="1.800" />
        </svg>
        SHAPE-THIN 8.20.00 x64 Developer - [Profil, CC1*]
      </TitleBar>

      <MenuBar>
        <Grip />
        <MenuLogo>
          <svg width="17" height="12" viewBox="0 0 17 12" fill="none" aria-hidden="true">
            <path d="M0 0h17v12H0z" fill="#1b2c66" />
            <path d="M0 7.500h17M8.500 1v10" stroke="#fff" strokeWidth="1.500" />
            <path d="M8 2 2 7M9 2l6 5" stroke="#fff" />
          </svg>
        </MenuLogo>
        {menus.map(([before, key, after]) => (
          <MenuButton type="button" key={before + key + after}>
            {before}
            {key && <u>{key}</u>}
            {after}
          </MenuButton>
        ))}
      </MenuBar>

      <ToolbarRow>
        <Toolbar>
          <Grip />
          <ToolGroups groups={fileTools} />
          <Combo label="Caso de carga" value="CC1 - Tensión y codo" width={155} />
          <ToolGroups groups={caseTools} />
        </Toolbar>
        <Toolbar>
          <Grip />
          <ToolGroups groups={editTools} />
        </Toolbar>
      </ToolbarRow>

      <ToolbarRow>
        <Toolbar>
          <Grip />
          <ToolGroups groups={insertTools} />
        </Toolbar>
        <Toolbar>
          <Grip />
          <ToolGroups groups={viewTools} />
        </Toolbar>
        <Toolbar $grow>
          <Grip />
          <ToolGroups groups={resultTools} />
          <Combo label="Barra" value="Barra: 1" width={155} />
          <ToolGroups groups={stepTools} />
          <PositionInput aria-label="Posición" defaultValue="Posición: 0.0" />
        </Toolbar>
      </ToolbarRow>

      <Workspace>
        <Navigator>
          <NavigatorHeader>
            <NavigatorTitle>Navegador de proyectos - Resultados</NavigatorTitle>
            <PanelButton type="button" aria-label="Fijar">
              <svg width="9" height="9" viewBox="0 0 9 9" fill="none" aria-hidden="true">
                <path d="M2.500 5V.5h4V5M1 5.500h7M4.500 6v3M5.500 1v4" stroke="#555a64" />
              </svg>
            </PanelButton>
            <PanelButton type="button" aria-label="Cerrar">
              <svg width="9" height="9" viewBox="0 0 9 9" fill="none" aria-hidden="true">
                <path d="m1 1 7 7M8 1 1 8" stroke="#555a64" strokeWidth="1.200" />
              </svg>
            </PanelButton>
          </NavigatorHeader>
          <NavigatorTree />
        </Navigator>
        <Canvas>
          <CrossSection />
        </Canvas>
      </Workspace>

      <Tooltip role="tooltip">Guardar modelo</Tooltip>
      <Annotation width="680" height="450" viewBox="0 0 680 450" fill="none" aria-hidden="true">
        <path d="M71.500 42.500h51v33h-51z" stroke="#0000ff" strokeWidth="3" />
        <path d="M666 435 152 103" stroke="#0000ff" strokeWidth="2" />
        <path d="m144 98 14 2-6 9z" fill="#0000ff" />
      </Annotation>
    </AppWindow>
  );
}
